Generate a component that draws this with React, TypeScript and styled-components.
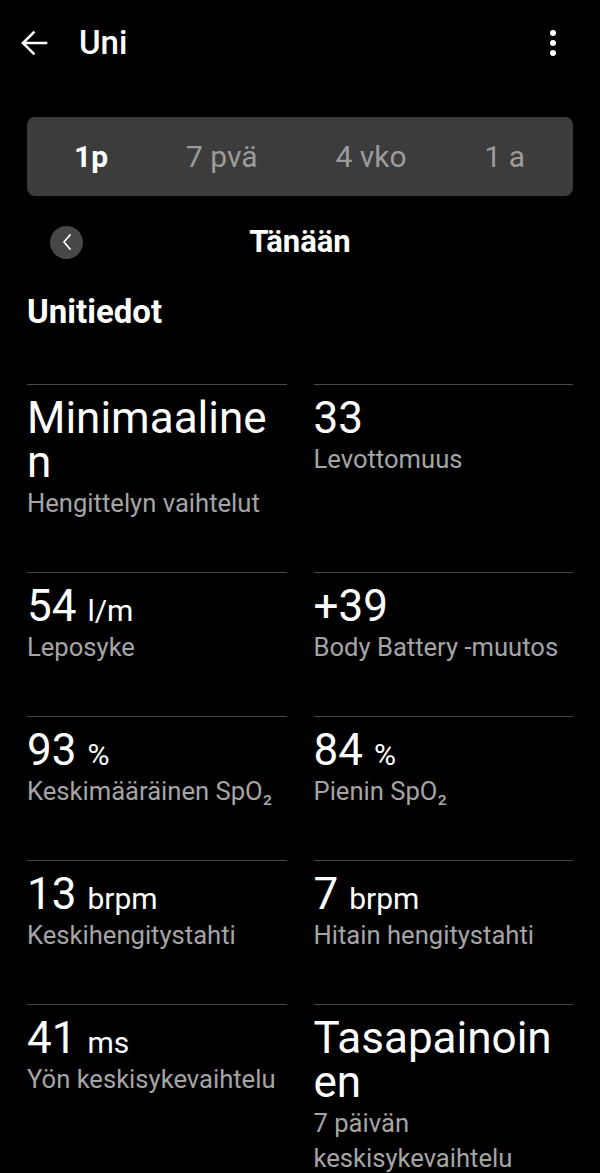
import React from "react";
import styled, { createGlobalStyle } from "styled-components";

const GlobalStyle = createGlobalStyle`
  html, body {
    margin: 0;
    padding: 0;
    background: #000;
  }
  body {
    font-family: Roboto, "Noto Sans", "Liberation Sans", sans-serif;
    color: #fff;
    -webkit-font-smoothing: antialiased;
  }
`;

const Screen = styled.div`
  width: 600px;
  height: 1173px;
  overflow: hidden;
  background: #000;
`;

const Header = styled.header`
  display: flex;
  align-items: center;
  height: 86px;
  padding: 0 23px 0 20px;
`;

const IconButton = styled.button`
  display: flex;
  align-items: center;
  justify-content: center;
  background: none;
  border: 0;
  padding: 0;
  color: #fff;
  cursor: pointer;
`;

const Title = styled.h1`
  margin: 0 0 0 31px;
  font-size: 33px;
  font-weight: 500;
  line-height: 40px;
  flex: 1;
`;

const Content = styled.main`
  padding: 0 27px;
`;

const Segmented = styled.div`
  margin-top: 31px;
  height: 79px;
  background: #3c3c3c;
  border-radius: 8px;
  display: flex;
  align-items: center;
  justify-content: space-between;
  padding: 0 48px 0 47px;
`;

const Tab = styled.span<{ $active?: boolean }>`
  font-size: 30px;
  line-height: 36px;
  font-weight: ${(p) => (p.$active ? 700 : 400)};
  color: ${(p) => (p.$active ? "#fff" : "#9b9b9b")};
`;

const DateRow = styled.div`
  margin-top: 16px;
  height: 60px;
  display: grid;
  grid-template-columns: 1fr auto 1fr;
  align-items: center;
`;

const RoundButton = styled.button`
  margin-left: 23px;
  width: 33px;
  height: 33px;
  border-radius: 50%;
  border: 0;
  padding: 0;
  background: #474747;
  display: flex;
  align-items: center;
  justify-content: center;
`;

const DateTitle = styled.div`
  font-size: 31px;
  font-weight: 700;
  line-height: 36px;
`;

const SectionTitle = styled.h2`
  margin: 20px 0 0;
  font-size: 33px;
  font-weight: 700;
  line-height: 40px;
`;

const Grid = styled.div`
  margin-top: 52px;
  display: grid;
  grid-template-columns: 1fr 1fr;
  column-gap: 27px;
`;

const Cell = styled.div`
  border-top: 1px solid #4a4a4a;
  padding: 11px 0 51px;
  min-width: 0;
`;

const Value = styled.div`
  font-size: 44px;
  line-height: 44px;
  font-weight: 400;
  color: #fff;
  overflow-wrap: anywhere;
`;

const Unit = styled.span`
  font-size: 30px;
  line-height: 1;
`;

const Label = styled.div`
  padding-top: 2px;
  font-size: 25.6px;
  line-height: 35px;
  color: #a5a5a5;
`;

type Metric = { value: string; unit?: string; label: string };

const metrics: Metric[] = [
  { value: "Minimaalinen", label: "Hengittelyn vaihtelut" },
  { value: "33", label: "Levottomuus" },
  { value: "54", unit: "l/m", label: "Leposyke" },
  { value: "+39", label: "Body Battery -muutos" },
  { value: "93", unit: "%", label: "Keskimääräinen SpO₂" },
  { value: "84", unit: "%", label: "Pienin SpO₂" },
  { value: "13", unit: "brpm", label: "Keskihengitystahti" },
  { value: "7", unit: "brpm", label: "Hitain hengitystahti" },
  { value: "41", unit: "ms", label: "Yön keskisykevaihtelu" },
  { value: "Tasapainoinen", label: "7 päivän keskisykevaihtelu" },
];

const BackArrow = () => (
  <svg width="28" height="28" viewBox="0 0 28 28" fill="none">
    <path
      d="M26 14H3M13.5 3.5L3 14l10.5 10.5"
      stroke="#fff"
      strokeWidth="2.6"
      strokeLinecap="square"
    />
  </svg>
);

const Kebab = () => (
  <svg width="48" height="48" viewBox="0 0 48 48">
    <circle cx="24" cy="14" r="3" fill="#fff" />
    <circle cx="24" cy="24" r="3" fill="#fff" />
    <circle cx="24" cy="34" r="3" fill="#fff" />
  </svg>
);

const Chevron = () => (
  <svg width="14" height="18" viewBox="0 0 14 18" fill="none">
    <path d="M10 2L4 9l6 7" stroke="#fff" strokeWidth="1.8" strokeLinecap="round" strokeLinejoin="round" />
  </svg>
);

export default function App() {
  return (
    <Screen>
      <GlobalStyle />
      <Header>
        <IconButton aria-label="Takaisin">
          <BackArrow />
        </IconButton>
        <Title>Uni</Title>
        <IconButton aria-label="Lisää">
          <Kebab />
        </IconButton>
      </Header>
      <Content>
        <Segmented>
          <Tab $active>1p</Tab>
          <Tab>7 pvä</Tab>
          <Tab>4 vko</Tab>
          <Tab>1 a</Tab>
        </Segmented>
        <DateRow>
          <div>
            <RoundButton aria-label="Edellinen">
              <Chevron />
            </RoundButton>
          </div>
          <DateTitle>Tänään</DateTitle>
          <div />
        </DateRow>
        <SectionTitle>Unitiedot</SectionTitle>
        <Grid>
          {metrics.map((m) => (
            <Cell key={m.label}>
              <Value>
                {m.value}
                {m.unit ? (
                  <>
                    {" "}
                    <Unit>{m.unit}</Unit>
                  </>
                ) : null}
              </Value>
              <Label>{m.label}</Label>
            </Cell>
          ))}
        </Grid>
      </Content>
    </Screen>
  );
}
